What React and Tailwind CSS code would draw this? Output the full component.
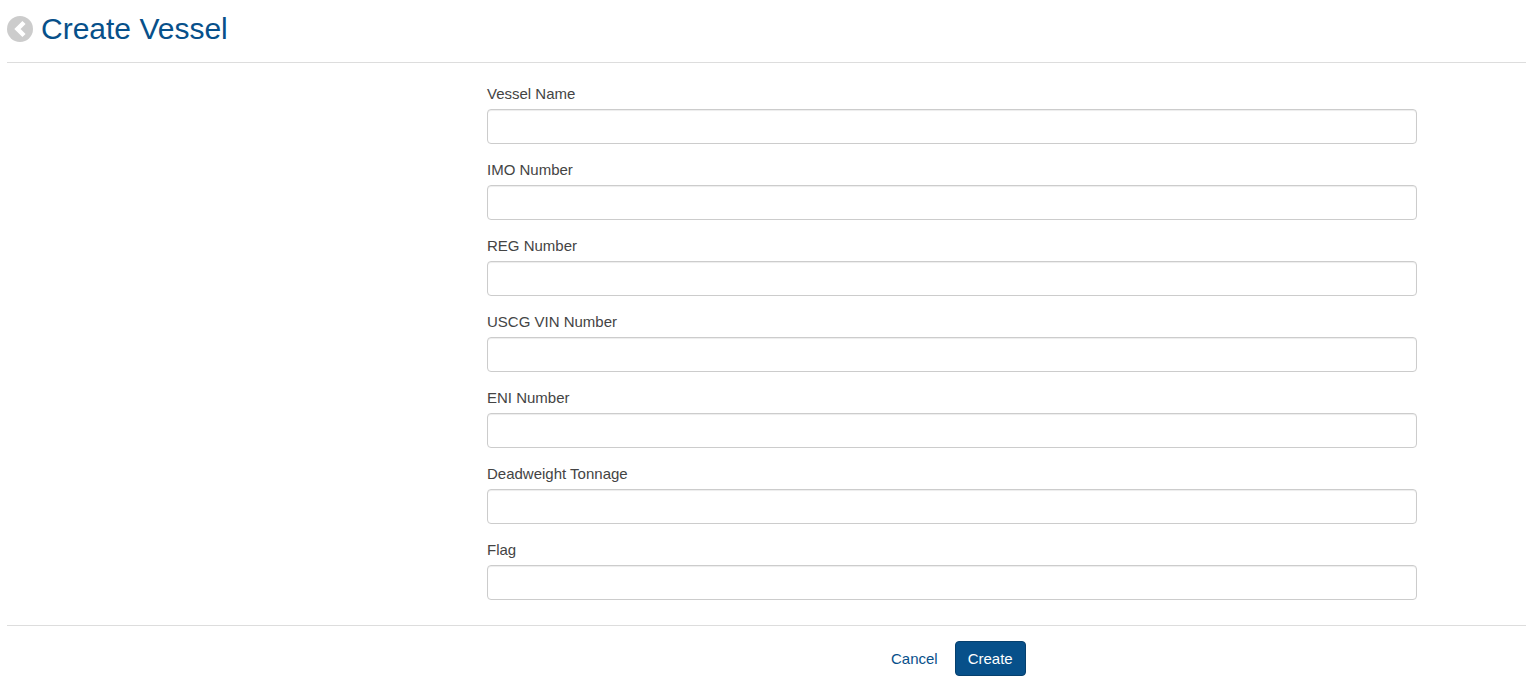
const fields = [
  'Vessel Name',
  'IMO Number',
  'REG Number',
  'USCG VIN Number',
  'ENI Number',
  'Deadweight Tonnage',
  'Flag',
];

const BackIcon = () => (
  <svg viewBox="0 0 26 26" className="w-[26px] h-[26px] shrink-0">
    <circle cx="13" cy="13" r="13" fill="#cccccc" />
    <path d="M17 6.5 10.5 13l6.5 6.5" fill="none" stroke="#ffffff" strokeWidth="4.5" />
  </svg>
);

const App = () => {
  return (
    <div className="min-h-[690px] bg-white pl-[7px] font-['Liberation_Sans',Arial,sans-serif] text-[15px] text-[#444444]">
      <div className="flex items-center gap-2 h-[63px] border-b border-[#dddddd] pb-[5px]">
        <BackIcon />
        <h1 className="text-[30px] leading-[33px] text-[#07508a]">Create Vessel</h1>
      </div>

      <form>
        <div className="flex flex-col gap-[15px] pt-[20px] pl-[480px] pb-[25px]">
          {fields.map((label) => (
            <div key={label}>
              <label className="block h-[26px] leading-[21px]">{label}</label>
              <input
                type="text"
                className="block w-[930px] h-[35px] bg-white border border-[#cccccc] rounded-[4px] shadow-[inset_0_1px_1px_rgba(0,0,0,0.075)]"
              />
            </div>
          ))}
        </div>

        <div className="flex items-center border-t border-[#dddddd] pt-[15px] pl-[884px]">
          <a className="text-[#07508a] leading-5">Cancel</a>
          <button
            type="button"
            className="ml-[17px] w-[71px] h-[35px] pt-px bg-[#07508a] border border-[#06406e] rounded-[4px] text-white"
          >
            Create
          </button>
        </div>
      </form>
    </div>
  );
};

export default App;
